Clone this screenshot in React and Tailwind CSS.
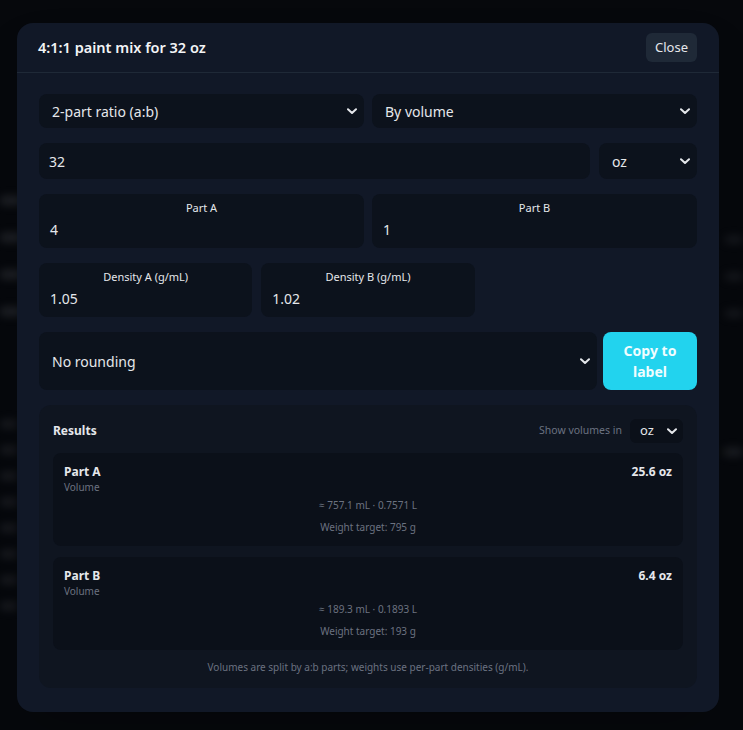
const font = { fontFamily: '"Segoe UI", "Noto Sans", "Open Sans", sans-serif' };

function Chevron() {
  return (
    <svg width="10" height="7" viewBox="0 0 10 7" className="shrink-0">
      <path d="M1 1.2 L5 5 L9 1.2" fill="none" stroke="#e5e7eb" strokeWidth="2" strokeLinecap="round" strokeLinejoin="round" />
    </svg>
  );
}

function SelectBox({ value, className = "" }) {
  return (
    <div className={`flex items-center justify-between rounded-lg bg-[#0c121c] pl-[13px] pr-[7px] text-[14px] text-[#e5e7eb] ${className}`}>
      <span>{value}</span>
      <Chevron />
    </div>
  );
}

function Field({ label, value }) {
  return (
    <div className="flex h-[54px] flex-col rounded-lg bg-[#0c121c] px-[11px] pt-[6px]">
      <div className="text-center text-[11px] leading-[16px] text-[#e5e7eb]">{label}</div>
      <div className="mt-[5px] text-[14px] leading-[18px] text-[#e5e7eb]">{value}</div>
    </div>
  );
}

function ResultCard({ name, amount, ml, weight }) {
  return (
    <div className="rounded-lg bg-[#0b1019] px-[11px] pt-[11px] pb-[9px]">
      <div className="flex items-start justify-between">
        <div>
          <div className="text-[12px] font-bold leading-[16px] text-[#e5e7eb]">{name}</div>
          <div className="text-[10px] leading-[14px] text-[#6b7280]">Volume</div>
        </div>
        <div className="text-[12px] font-bold leading-[16px] text-[#e5e7eb]">{amount}</div>
      </div>
      <div className="mt-[1px] text-center text-[10px] leading-[20px] text-[#6b7280]">{ml}</div>
      <div className="mt-[2px] text-center text-[10px] leading-[20px] text-[#6b7280]">{weight}</div>
    </div>
  );
}

export default function App() {
  return (
    <div style={font} className="relative min-h-[730px] overflow-hidden bg-[#06080c]">
      {/* blurred page behind the dialog */}
      <div className="absolute inset-0 blur-[4px] opacity-50">
        <div className="absolute left-0 top-[196px] flex flex-col gap-[28px]">
          {[0, 1, 2, 3].map((i) => (
            <div key={i} className="h-[9px] w-[22px] rounded bg-[#3a3d44]" />
          ))}
        </div>
        <div className="absolute right-0 top-[236px] flex flex-col gap-[30px]">
          {[0, 1, 2].map((i) => (
            <div key={i} className="h-[7px] w-[18px] rounded bg-[#2a2d33]" />
          ))}
        </div>
        <div className="absolute right-0 top-[448px] h-[8px] w-[20px] rounded bg-[#34373e]" />
        <div className="absolute left-0 top-[420px] flex flex-col gap-[18px]">
          {[0, 1, 2, 3, 4, 5, 6, 7].map((i) => (
            <div key={i} className="h-[8px] w-[18px] rounded bg-[#2e3037]" />
          ))}
        </div>
      </div>

      <div className="relative flex pl-[17px] pt-[23px]">
        <div className="w-[702px] overflow-hidden rounded-2xl bg-[#111827] shadow-2xl">
          {/* header */}
          <div className="flex h-[50px] items-center justify-between border-b border-[#1f2937] pl-[21px] pr-[22px]">
            <h2 className="text-[14.5px] font-semibold text-[#f3f4f6]">4:1:1 paint mix for 32 oz</h2>
            <button className="h-[29px] w-[51px] rounded-md bg-[#1f2937] text-[13px] text-[#e5e7eb]">Close</button>
          </div>

          {/* body */}
          <div className="flex flex-col gap-[15px] px-[22px] pt-[21px] pb-[24px]">
            <div className="grid grid-cols-2 gap-[8px]">
              <SelectBox value="2-part ratio (a:b)" className="h-[34px]" />
              <SelectBox value="By volume" className="h-[34px]" />
            </div>

            <div className="flex gap-[9px]">
              <div className="flex h-[36px] flex-1 items-center rounded-lg bg-[#0c121c] pl-[10px] text-[14px] text-[#e5e7eb]">32</div>
              <SelectBox value="oz" className="h-[36px] w-[98px]" />
            </div>

            <div className="grid grid-cols-2 gap-[8px]">
              <Field label="Part A" value="4" />
              <Field label="Part B" value="1" />
            </div>

            <div className="grid grid-cols-3 gap-[9px]">
              <Field label="Density A (g/mL)" value="1.05" />
              <Field label="Density B (g/mL)" value="1.02" />
            </div>

            <div className="flex gap-[6px]">
              <SelectBox value="No rounding" className="h-[58px] flex-1 pr-[5px]" />
              <button className="h-[58px] w-[94px] rounded-lg bg-[#22d3ee] px-[10px] text-[14px] font-bold leading-[21px] text-[#f0fdff]">
                Copy to label
              </button>
            </div>

            {/* results */}
            <div className="rounded-xl bg-[#0f1520] px-[14px] pt-[14px] pb-[15px]">
              <div className="flex h-[24px] items-center justify-between">
                <div className="text-[12px] font-bold text-[#e5e7eb]">Results</div>
                <div className="flex items-center gap-[8px]">
                  <span className="text-[10.5px] text-[#6b7280]">Show volumes in</span>
                  <div className="flex h-[24px] w-[53px] items-center justify-between rounded-md bg-[#0b1019] pl-[10px] pr-[6px] text-[13px] text-[#e5e7eb]">
                    <span>oz</span>
                    <Chevron />
                  </div>
                </div>
              </div>

              <div className="mt-[10px] flex flex-col gap-[11px]">
                <ResultCard name="Part A" amount="25.6 oz" ml="≈ 757.1 mL · 0.7571 L" weight="Weight target: 795 g" />
                <ResultCard name="Part B" amount="6.4 oz" ml="≈ 189.3 mL · 0.1893 L" weight="Weight target: 193 g" />
              </div>

              <div className="mt-[11px] text-center text-[10px] leading-[12px] text-[#6b7280]">
                Volumes are split by a:b parts; weights use per-part densities (g/mL).
              </div>
            </div>
          </div>
        </div>
      </div>
    </div>
  );
}
